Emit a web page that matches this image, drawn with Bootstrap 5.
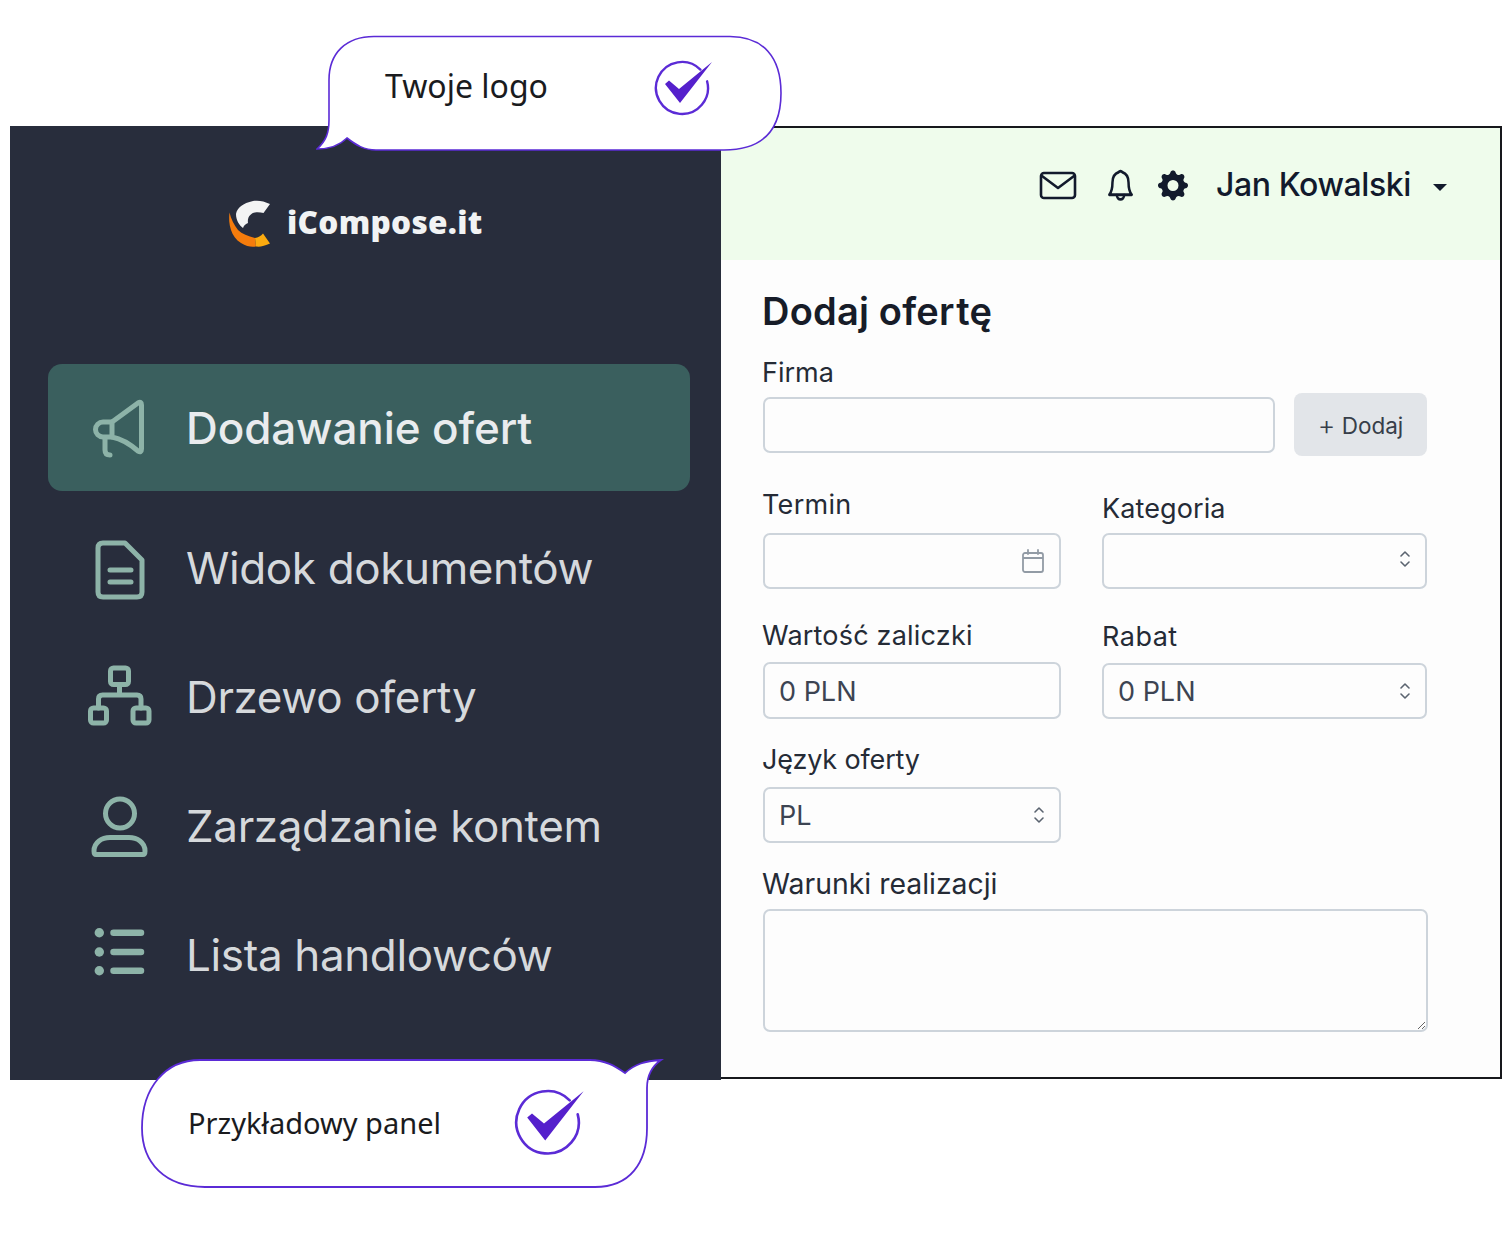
<!DOCTYPE html>
<html lang="pl">
<head>
<meta charset="utf-8">
<title>iCompose</title>
<link rel="stylesheet" href="https://cdn.jsdelivr.net/npm/bootstrap@5.3.0/dist/css/bootstrap.min.css">
<style>
body{background:#fff;font-family:Inter,"Liberation Sans",sans-serif;color:#1c2330}
.stage{width:1512px;height:1260px;padding:126px 10px 0;position:relative;overflow:hidden}
.frame{height:954px;width:1492px}
.side{width:711px;background:#282d3c;flex:none}
.logo-row{height:238px;padding:74px 0 0 218px;gap:15px}
.logo-txt{font:800 31.500px/44px "Open Sans",sans-serif;color:#f1f3f4;letter-spacing:.3px}
.side-nav{padding:0 31px 0 38px}
.side-link{height:128px;margin-bottom:1px;padding-left:40px;gap:34px;font-size:44px;color:#d6d9dc;text-decoration:none;border-radius:14px;line-height:1;letter-spacing:-.37px}
.side-link.on{height:127px;margin-bottom:13px;background:#3a5f5e;color:#e9ecee;font-weight:500;letter-spacing:-.1px}
.side-ico{width:64px;height:72px;flex:none;fill:none;stroke:#8db3a8;stroke-width:5;stroke-linecap:round;stroke-linejoin:round;color:#8db3a8}
.pane{flex:1;background:#fdfdfd;border:solid #17181c;border-width:2px 2px 2px 0;min-width:0;margin-bottom:1px}
.pane-top{height:132px;background:#effcec;padding:0 53px 18px 0;font-size:32px;font-weight:500;color:#121a2c;letter-spacing:-.4px}
.pane-top svg{flex:none}
.ico-mail{margin-right:31px}
.ico-bell{margin-right:25px}
.who{margin-left:28px}
.who.dropdown-toggle::after{margin-left:22px;vertical-align:.16em;border-top-width:.24em;border-left-width:.22em;border-right-width:.22em}
.form-zone{padding:29px 0 0 42px;width:707px}
.form-zone h1{font-size:38px;line-height:44px;font-weight:600;margin:0 0 23px -1px;color:#171c28;letter-spacing:.2px}
.title-gap{margin-left:2px}
.lab{display:block;font-size:27px;line-height:34px;color:#252b36;margin:0 0 10px -1px}
.lab-firma{margin-bottom:3px}
.lab-term{margin:32px 0 11px -1px;letter-spacing:.3px}
.lab-kat{margin:36px 0 7px 0;letter-spacing:.1px}
.lab-war{margin:30px 0 9px -1px;letter-spacing:.2px}
.lab-rab{margin:31px 0 9px 0;letter-spacing:.5px}
.lab-jez{margin:24px 0 10px -1px;letter-spacing:-.15px}
.lab-wrn{margin:24px 0 8px -1px;font-size:28.400px}
.fld-l{width:298px;flex:none}
.fld-r{width:325px;flex:none;margin-left:41px}
.form-zone .form-control,.form-zone .form-select{height:56px;border:2px solid #cdd4db;border-radius:7px;background-color:#fdfdfd;color:#3c4452;font-size:27px;padding:2px 14px 0;box-shadow:none}
.inp-firma{margin-top:1px;width:512px!important;flex:none}
.inp-tall{height:57px!important}
.form-zone .form-select{background-image:url("data:image/svg+xml,%3Csvg xmlns='http://www.w3.org/2000/svg' viewBox='0 0 12 22'%3E%3Cpath d='M2 8l4-4 4 4M2 14l4 4 4-4' fill='none' stroke='%235b6470' stroke-width='1.600' stroke-linecap='round' stroke-linejoin='round'/%3E%3C/svg%3E");background-size:12px 22px;background-position:right 14px center}
.form-zone .sel-high{background-position:right 14px top 13px}
.inp-date{background-image:url("data:image/svg+xml,%3Csvg xmlns='http://www.w3.org/2000/svg' viewBox='0 0 24 26'%3E%3Cpath d='M2 7a2 2 0 0 1 2-2h16a2 2 0 0 1 2 2v15a2 2 0 0 1-2 2H4a2 2 0 0 1-2-2zM2 10h20M7 2v4M17 2v4' fill='none' stroke='%23929ba5' stroke-width='1.800' stroke-linecap='round'/%3E%3C/svg%3E");background-repeat:no-repeat;background-size:24px 26px;background-position:right 14px center}
.btn-add{width:133px;height:63px;margin-left:19px;background:#e2e5e9;border:0;border-radius:8px;font-size:22.500px;color:#373e49;padding:2px 0 0}
.plus-mark{font-size:27px;font-weight:300;line-height:1;vertical-align:-1px}
.form-zone textarea.form-control{height:123px;width:665px}
.bubble{position:absolute}
.bub-shape{position:absolute;inset:0;width:100%;height:100%}
.bub-body{position:relative;height:100%;color:#1a1b1e;font-family:"Noto Sans",sans-serif}
.bub-a{left:316px;top:35px;width:468px;height:117px}
.bub-a .bub-body{padding:0 0 15px 69px;font-size:32px;gap:106px}
.bub-a .tick{width:60px;height:60px}
.bub-b{left:140px;top:1058px;width:524px;height:131px}
.bub-b .bub-body{padding:0 0 2px 48px;font-size:29px;gap:73px}
.bub-b .tick{width:72px;height:72px;margin-bottom:5px}
.tick{flex:none}
</style>
</head>
<body>
<div class="stage">
  <div class="frame d-flex">
    <aside class="side">
      <div class="logo-row d-flex align-items-start">
        <svg width="44" height="48" viewBox="0 0 44 48">
          <path d="M42 4C36 1 30 0 25 1C15 3 9 8 8 14C8 20 11 25 15 28C16 25 18 24 20 23C19 17 23 13 27 12.500C30 12 33 12.500 35.500 13Z" fill="#f3f4f4"/>
          <path d="M1.500 12.500C0 24 3 37 13 43C19 47 24 47 28 46.500L27 38C20 36 14 34 10 30C6 25 3 19 1.500 12.500Z" fill="#f57c0c"/>
          <path d="M27 38C30 37.500 33 36 35 33.500L42 43.500C37 46 32 47 28 46.500Z" fill="#fcab0f"/>
        </svg>
        <span class="logo-txt">iCompose.it</span>
      </div>
      <nav class="side-nav d-flex flex-column">
        <a href="#" class="side-link on d-flex align-items-center">
          <svg class="side-ico" viewBox="0 0 64 72"><path d="M24 30L50 11Q53.500 9 53.500 13V57Q53.500 61 50 59C42 52 34 47 24 45Z"/><path d="M24 30H15A7.500 7.500 0 0 0 15 45H24"/><path d="M17 46V58Q17 63 22 63"/></svg>
          <span>Dodawanie ofert</span>
        </a>
        <a href="#" class="side-link d-flex align-items-center">
          <svg class="side-ico" viewBox="0 0 64 72"><path d="M15 11H37L54 28V60Q54 65 49 65H15Q10 65 10 60V16Q10 11 15 11Z"/><path d="M22 38H43M22 50H43"/></svg>
          <span>Widok dokumentów</span>
        </a>
        <a href="#" class="side-link d-flex align-items-center">
          <svg class="side-ico" viewBox="0 0 64 72"><rect x="22.500" y="7" width="18" height="16.500" rx="3"/><rect x="2.500" y="47" width="16" height="15" rx="3"/><rect x="45" y="47" width="16" height="15" rx="3"/><path d="M31.500 23.500V34M10.500 47V38Q10.500 34 14.500 34H49Q53 34 53 38V47"/></svg>
          <span>Drzewo oferty</span>
        </a>
        <a href="#" class="side-link d-flex align-items-center">
          <svg class="side-ico" viewBox="0 0 64 72"><circle cx="32" cy="23.500" r="14.500"/><path d="M8 64.500Q6 64.500 6 61C6 52 14 47.500 22 47.500H41C49 47.500 57 52 57 61Q57 64.500 55 64.500Z"/></svg>
          <span>Zarządzanie kontem</span>
        </a>
        <a href="#" class="side-link d-flex align-items-center">
          <svg class="side-ico" viewBox="0 0 64 72"><path d="M25.500 13.700H53M25.500 33H53M25.500 51.700H53" stroke-width="6.500"/><circle cx="11.300" cy="13.700" r="4.700" fill="#8db3a8" stroke="none"/><circle cx="11.300" cy="33" r="4.700" fill="#8db3a8" stroke="none"/><circle cx="11.300" cy="51.700" r="4.700" fill="#8db3a8" stroke="none"/></svg>
          <span>Lista handlowców</span>
        </a>
      </nav>
    </aside>
    <main class="pane">
      <header class="pane-top d-flex align-items-center justify-content-end">
        <svg class="ico-mail" width="38" height="30" viewBox="0 0 38 30" fill="none" stroke="#121a2c" stroke-width="2.600" stroke-linejoin="round" stroke-linecap="round"><rect x="2" y="3" width="34" height="25" rx="3"/><path d="M3 6L19 18L35 6"/></svg>
        <svg class="ico-bell" width="25" height="35" viewBox="0 0 28 34" preserveAspectRatio="none" fill="none" stroke="#121a2c" stroke-width="2.800" stroke-linejoin="round" stroke-linecap="round"><path d="M14 3a3 3 0 0 1 2 1C21 5.500 23 9 23 14C23 20 24 23 26.500 26H1.500C4 23 5 20 5 14C5 9 7 5.500 12 4a3 3 0 0 1 2-1Z"/><path d="M10 26.500a4 4 0 0 0 8 0"/></svg>
        <svg width="30" height="31" viewBox="0 0 16 16" fill="#121a2c"><path d="M9.405 1.050c-.413-1.400-2.397-1.400-2.810 0l-.100.340a1.464 1.464 0 0 1-2.105.872l-.310-.170c-1.283-.698-2.686.705-1.987 1.987l.169.311c.446.820.023 1.841-.872 2.105l-.340.100c-1.400.413-1.400 2.397 0 2.810l.340.100a1.464 1.464 0 0 1 .872 2.105l-.170.310c-.698 1.283.705 2.686 1.987 1.987l.311-.169a1.464 1.464 0 0 1 2.105.872l.100.340c.413 1.400 2.397 1.400 2.810 0l.100-.340a1.464 1.464 0 0 1 2.105-.872l.310.170c1.283.698 2.686-.705 1.987-1.987l-.169-.311a1.464 1.464 0 0 1 .872-2.105l.340-.100c1.400-.413 1.400-2.397 0-2.810l-.340-.100a1.464 1.464 0 0 1-.872-2.105l.170-.310c.698-1.283-.705-2.686-1.987-1.987l-.311.169a1.464 1.464 0 0 1-2.105-.872l-.100-.340zM8 10.930a2.929 2.929 0 1 1 0-5.860 2.929 2.929 0 0 1 0 5.858z"/></svg>
        <span class="who dropdown-toggle">Jan Kowalski</span>
      </header>
      <form class="form-zone">
        <h1>Dodaj ofer<span class="title-gap">tę</span></h1>
        <label class="lab lab-firma">Firma</label>
        <div class="d-flex align-items-center">
          <input class="form-control inp-firma" type="text" aria-label="Firma">
          <button type="button" class="btn btn-add"><span class="plus-mark">+</span> Dodaj</button>
        </div>
        <div class="d-flex">
          <div class="fld-l"><label class="lab lab-term">Termin</label><input class="form-control inp-date" type="text" aria-label="Termin"></div>
          <div class="fld-r"><label class="lab lab-kat">Kategoria</label><select class="form-select sel-high" aria-label="Kategoria"><option></option></select></div>
        </div>
        <div class="d-flex">
          <div class="fld-l"><label class="lab lab-war">Wartość zaliczki</label><input class="form-control inp-tall" type="text" value="0 PLN" aria-label="Wartość zaliczki"></div>
          <div class="fld-r"><label class="lab lab-rab">Rabat</label><select class="form-select" aria-label="Rabat"><option>0 PLN</option></select></div>
        </div>
        <div class="fld-l"><label class="lab lab-jez">Język oferty</label><select class="form-select" aria-label="Język oferty"><option>PL</option></select></div>
        <label class="lab lab-wrn">Warunki realizacji</label>
        <textarea class="form-control" aria-label="Warunki realizacji"></textarea>
      </form>
    </main>
  </div>

  <div class="bubble bub-a">
    <svg class="bub-shape" viewBox="0 0 468 117"><path d="M58 1.500H414C447 1.500 465 22 465 58C465 95 447 115 408 115H60C48 115 40 110 31 103C24 110 14 114 1 114C10 106 13 98 13 85V45C13 18 30 1.500 58 1.500Z" fill="#fff" stroke="#5b2bd6" stroke-width="1.600"/></svg>
    <div class="bub-body d-flex align-items-center">
      <span>Twoje logo</span>
      <svg class="tick" viewBox="0 0 60 60"><path d="M46.400 13.600A26 26 0 1 0 53.100 25.300" fill="none" stroke="#5b2bd6" stroke-width="2.400" stroke-linecap="round"/><path d="M11 28L15 24.500L25 33L58 6L26 47Z" fill="#5520cc"/></svg>
    </div>
  </div>
  <div class="bubble bub-b">
    <svg class="bub-shape" viewBox="0 0 524 131"><path d="M60 2H450C465 2 475 8 485 15C495 6 505 3 521 2C511 9 507 18 507 30V70C507 105 490 129 455 129H65C25 129 2 105 2 70C2 30 25 2 60 2Z" fill="#fff" stroke="#5b2bd6" stroke-width="1.800"/></svg>
    <div class="bub-body d-flex align-items-center">
      <span>Przykładowy panel</span>
      <svg class="tick" viewBox="0 0 60 60"><path d="M46.400 13.600A26 26 0 1 0 53.100 25.300" fill="none" stroke="#5b2bd6" stroke-width="2.200" stroke-linecap="round"/><path d="M11 28L15 24.500L25 33L58 6L26 47Z" fill="#5520cc"/></svg>
    </div>
  </div>
</div>
<script src="https://cdn.jsdelivr.net/npm/bootstrap@5.3.0/dist/js/bootstrap.bundle.min.js"></script>
</body>
</html>
